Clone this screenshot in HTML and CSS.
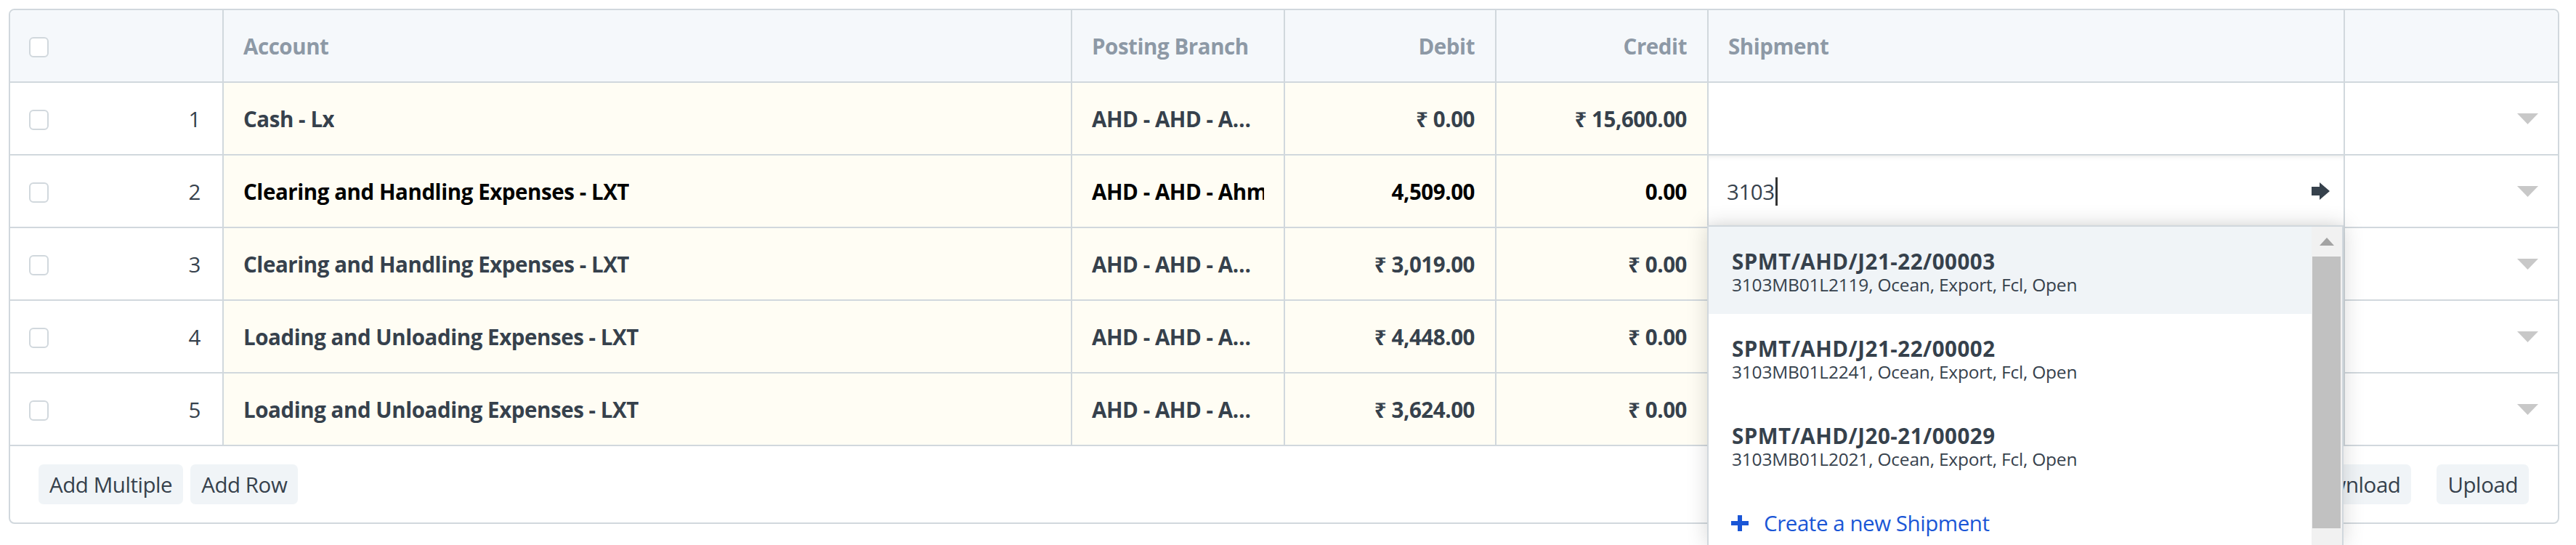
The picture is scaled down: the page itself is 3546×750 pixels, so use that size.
FILE: index.html
```html
<!DOCTYPE html>
<html>
<head>
<meta charset="utf-8">
<link rel="stylesheet" href="styles.css">
</head>
<body>
<div class="page">
  <div class="grid">
    <div class="row head">
      <div class="cell idx"><span class="cb"></span></div>
      <div class="cell">Account</div>
      <div class="cell">Posting Branch</div>
      <div class="cell num">Debit</div>
      <div class="cell num">Credit</div>
      <div class="cell">Shipment</div>
      <div class="cell"></div>
    </div>

    <div class="row">
      <div class="cell idx"><span class="cb"></span><span class="no">1</span></div>
      <div class="cell ed"><span class="txt">Cash - Lx</span></div>
      <div class="cell ed"><span class="txt">AHD - AHD - Ahmedabad</span></div>
      <div class="cell ed num">₹ 0.00</div>
      <div class="cell ed num">₹ 15,600.00</div>
      <div class="cell"></div>
      <div class="cell last"><svg class="tri" width="29" height="15" viewBox="0 0 29 15"><path d="M0 0h29L14.5 15z"/></svg></div>
    </div>

    <div class="row active">
      <div class="cell idx"><span class="cb"></span><span class="no">2</span></div>
      <div class="cell ed"><span class="txt">Clearing and Handling Expenses - LXT</span></div>
      <div class="cell ed"><span class="clip">AHD - AHD - Ahmedabad</span></div>
      <div class="cell ed num">4,509.00</div>
      <div class="cell ed num">0.00</div>
      <div class="cell inp">
        <span class="val">3103</span><span class="caret"></span>
        <svg class="go" width="25" height="24" viewBox="0 0 25 24"><path d="M0 6h11V0l14 12-14 12v-6H0z"/></svg>
        <div class="dd">
          <div class="dd-list">
            <div class="item sel">
              <div class="t">SPMT/AHD/J21-22/00003</div>
              <div class="s">3103MB01L2119, Ocean, Export, Fcl, Open</div>
            </div>
            <div class="item">
              <div class="t">SPMT/AHD/J21-22/00002</div>
              <div class="s">3103MB01L2241, Ocean, Export, Fcl, Open</div>
            </div>
            <div class="item">
              <div class="t">SPMT/AHD/J20-21/00029</div>
              <div class="s">3103MB01L2021, Ocean, Export, Fcl, Open</div>
            </div>
            <div class="item create">
              <svg class="plus" width="24" height="22" viewBox="0 0 24 22"><path d="M9 0h6v8h9v6h-9v8H9v-8H0V8h9z"/></svg>
              <span>Create a new Shipment</span>
            </div>
          </div>
          <div class="dd-sb">
            <div class="sb-up"><svg width="20" height="11" viewBox="0 0 20 11"><path d="M10 0l10 11H0z"/></svg></div>
            <div class="sb-thumb"></div>
          </div>
        </div>
      </div>
      <div class="cell last"><svg class="tri" width="29" height="15" viewBox="0 0 29 15"><path d="M0 0h29L14.5 15z"/></svg></div>
    </div>

    <div class="row">
      <div class="cell idx"><span class="cb"></span><span class="no">3</span></div>
      <div class="cell ed"><span class="txt">Clearing and Handling Expenses - LXT</span></div>
      <div class="cell ed"><span class="txt">AHD - AHD - Ahmedabad</span></div>
      <div class="cell ed num">₹ 3,019.00</div>
      <div class="cell ed num">₹ 0.00</div>
      <div class="cell"></div>
      <div class="cell last"><svg class="tri" width="29" height="15" viewBox="0 0 29 15"><path d="M0 0h29L14.5 15z"/></svg></div>
    </div>

    <div class="row">
      <div class="cell idx"><span class="cb"></span><span class="no">4</span></div>
      <div class="cell ed"><span class="txt">Loading and Unloading Expenses - LXT</span></div>
      <div class="cell ed"><span class="txt">AHD - AHD - Ahmedabad</span></div>
      <div class="cell ed num">₹ 4,448.00</div>
      <div class="cell ed num">₹ 0.00</div>
      <div class="cell"></div>
      <div class="cell last"><svg class="tri" width="29" height="15" viewBox="0 0 29 15"><path d="M0 0h29L14.5 15z"/></svg></div>
    </div>

    <div class="row">
      <div class="cell idx"><span class="cb"></span><span class="no">5</span></div>
      <div class="cell ed"><span class="txt">Loading and Unloading Expenses - LXT</span></div>
      <div class="cell ed"><span class="txt">AHD - AHD - Ahmedabad</span></div>
      <div class="cell ed num">₹ 3,624.00</div>
      <div class="cell ed num">₹ 0.00</div>
      <div class="cell"></div>
      <div class="cell last"><svg class="tri" width="29" height="15" viewBox="0 0 29 15"><path d="M0 0h29L14.5 15z"/></svg></div>
    </div>

    <div class="foot">
      <div class="btns">
        <span class="btn">Add Multiple</span>
        <span class="btn">Add Row</span>
      </div>
      <div class="btns right">
        <span class="btn">Download</span>
        <span class="btn">Upload</span>
      </div>
    </div>
  </div>
</div>
</body>
</html>
```

FILE: styles.css
```css
html, body {
  margin: 0;
  padding: 0;
  height: 750px;
  overflow: hidden;
  background: #ffffff;
}
body {
  font-family: "Open Sans", "Noto Sans", sans-serif;
  font-size: 29.5px;
  color: #36414c;
  letter-spacing: -0.015em;
}
.page {
  padding: 12px 0 0 12px;
}
.grid {
  width: 3511px;
  box-sizing: border-box;
  border: 2px solid #d1d8dd;
  border-radius: 8px;
}
.row {
  display: grid;
  grid-template-columns: 292px 1168px 293px 291px 292px 876px 1fr;
  height: 100px;
  box-sizing: border-box;
  border-bottom: 2px solid #d1d8dd;
}
.head {
  background: #f5f8fb;
  border-radius: 6px 6px 0 0;
}
.cell {
  border-left: 2px solid #d1d8dd;
  display: flex;
  align-items: center;
  padding: 0 27px;
  min-width: 0;
  font-weight: 700;
  white-space: nowrap;
}
.cell:first-child {
  border-left: 0;
}
.head .cell {
  color: #8d99a6;
}
.cell.num {
  justify-content: flex-end;
  padding-right: 28px;
}
.cell.ed {
  background: #fffdf4;
}
.txt {
  overflow: hidden;
  text-overflow: ellipsis;
  min-width: 0;
}
.clip {
  overflow: hidden;
  min-width: 0;
}
.active .cell.ed {
  color: #000000;
}
.idx {
  justify-content: space-between;
  padding: 0 30px 0 26px;
  font-weight: 400;
}
.cb {
  width: 27px;
  height: 28px;
  box-sizing: border-box;
  border: 2px solid #d1d8dd;
  border-radius: 6px;
  background: #ffffff;
  margin-top: 4px;
}
.no {
  color: #36414c;
}
.last {
  justify-content: flex-end;
}
.tri {
  fill: #c8c8c8;
}
.inp {
  position: relative;
  background: #ffffff;
  font-weight: 400;
  padding: 0 19px 0 25px;
  box-shadow: inset 0 5px 6px -4px rgba(0, 0, 0, 0.10), inset 0 -14px 14px -12px rgba(0, 0, 0, 0.05);
}
.val {
  color: #36414c;
}
.caret {
  width: 3px;
  height: 39px;
  background: #333333;
  margin-left: 1px;
}
.go {
  margin-left: auto;
  fill: #36414c;
}
.dd {
  position: absolute;
  left: -2px;
  top: 96px;
  width: 876px;
  height: 440px;
  box-sizing: border-box;
  background: #ffffff;
  border: 2px solid #d1d8dd;
  border-bottom: 0;
  box-shadow: 0 0 28px rgba(0, 0, 0, 0.16);
  z-index: 10;
  display: flex;
  overflow: hidden;
}
.dd-list {
  flex: 1;
  min-width: 0;
}
.item {
  height: 120px;
  box-sizing: border-box;
  padding: 31px 32px 25px;
  color: #36414c;
}
.item.sel {
  background: #f0f4f7;
}
.item .t {
  font-weight: 700;
  line-height: 34px;
  letter-spacing: 0.5px;
}
.item .s {
  font-weight: 400;
  font-size: 24.5px;
  line-height: 30px;
  letter-spacing: -0.2px;
}
.item.create {
  display: flex;
  align-items: flex-start;
  color: #1a56d6;
  font-weight: 400;
  padding-left: 31px;
  line-height: 34px;
}
.plus {
  fill: #1a56d6;
  margin: 6px 21px 0 0;
}
.dd-sb {
  width: 42px;
  background: #f1f1f1;
  display: flex;
  flex-direction: column;
}
.sb-up {
  height: 41px;
  display: flex;
  align-items: center;
  justify-content: center;
  fill: #a3a3a3;
}
.sb-thumb {
  height: 374px;
  margin: 0 2px 0 1px;
  background: #c1c1c1;
}
.foot {
  height: 105px;
  display: flex;
  align-items: center;
  justify-content: space-between;
  padding: 0 40px 0 39px;
}
.btns {
  display: flex;
  gap: 10px;
}
.btns.right {
  gap: 35px;
}
.btn {
  height: 55px;
  padding: 0 15px;
  background: #f0f4f7;
  border-radius: 7px;
  display: flex;
  align-items: center;
  font-weight: 400;
}
```
